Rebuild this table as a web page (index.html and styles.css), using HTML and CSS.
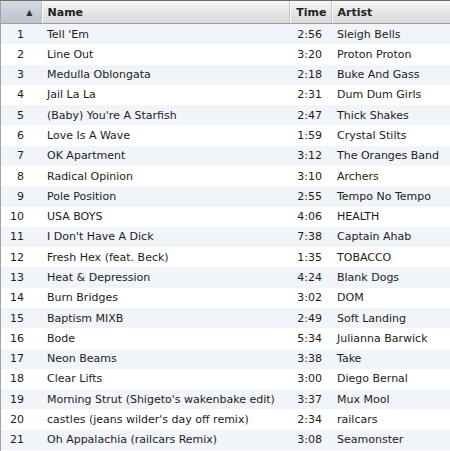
FILE: index.html
```html
<!DOCTYPE html>
<html lang="en">
    <head>
        <meta charset="UTF-8" />
        <title>Library</title>
        <link rel="stylesheet" href="styles.css">
    </head>
    <body>
        <section class="library">
            <table class="tracks">
                <colgroup>
                    <col class="col-num" />
                    <col class="col-name" />
                    <col class="col-time" />
                    <col class="col-artist" />
                </colgroup>
                <thead>
                    <tr>
                        <th class="num sorted"><span class="arrow">&#9650;</span></th>
                        <th class="name">Name</th>
                        <th class="time">Time</th>
                        <th class="artist">Artist</th>
                    </tr>
                </thead>
                <tbody>
                    <tr><td class="num">1</td><td class="name">Tell 'Em</td><td class="time">2:56</td><td class="artist">Sleigh Bells</td></tr>
                    <tr><td class="num">2</td><td class="name">Line Out</td><td class="time">3:20</td><td class="artist">Proton Proton</td></tr>
                    <tr><td class="num">3</td><td class="name">Medulla Oblongata</td><td class="time">2:18</td><td class="artist">Buke And Gass</td></tr>
                    <tr><td class="num">4</td><td class="name">Jail La La</td><td class="time">2:31</td><td class="artist">Dum Dum Girls</td></tr>
                    <tr><td class="num">5</td><td class="name">(Baby) You're A Starfish</td><td class="time">2:47</td><td class="artist">Thick Shakes</td></tr>
                    <tr><td class="num">6</td><td class="name">Love Is A Wave</td><td class="time">1:59</td><td class="artist">Crystal Stilts</td></tr>
                    <tr><td class="num">7</td><td class="name">OK Apartment</td><td class="time">3:12</td><td class="artist">The Oranges Band</td></tr>
                    <tr><td class="num">8</td><td class="name">Radical Opinion</td><td class="time">3:10</td><td class="artist">Archers</td></tr>
                    <tr><td class="num">9</td><td class="name">Pole Position</td><td class="time">2:55</td><td class="artist">Tempo No Tempo</td></tr>
                    <tr><td class="num">10</td><td class="name">USA BOYS</td><td class="time">4:06</td><td class="artist">HEALTH</td></tr>
                    <tr><td class="num">11</td><td class="name">I Don't Have A Dick</td><td class="time">7:38</td><td class="artist">Captain Ahab</td></tr>
                    <tr><td class="num">12</td><td class="name">Fresh Hex (feat. Beck)</td><td class="time">1:35</td><td class="artist">TOBACCO</td></tr>
                    <tr><td class="num">13</td><td class="name">Heat &amp; Depression</td><td class="time">4:24</td><td class="artist">Blank Dogs</td></tr>
                    <tr><td class="num">14</td><td class="name">Burn Bridges</td><td class="time">3:02</td><td class="artist">DOM</td></tr>
                    <tr><td class="num">15</td><td class="name">Baptism MIXB</td><td class="time">2:49</td><td class="artist">Soft Landing</td></tr>
                    <tr><td class="num">16</td><td class="name">Bode</td><td class="time">5:34</td><td class="artist">Julianna Barwick</td></tr>
                    <tr><td class="num">17</td><td class="name">Neon Beams</td><td class="time">3:38</td><td class="artist">Take</td></tr>
                    <tr><td class="num">18</td><td class="name">Clear Lifts</td><td class="time">3:00</td><td class="artist">Diego Bernal</td></tr>
                    <tr><td class="num">19</td><td class="name">Morning Strut (Shigeto's wakenbake edit)</td><td class="time">3:37</td><td class="artist">Mux Mool</td></tr>
                    <tr><td class="num">20</td><td class="name">castles (jeans wilder's day off remix)</td><td class="time">2:34</td><td class="artist">railcars</td></tr>
                    <tr><td class="num">21</td><td class="name">Oh Appalachia (railcars Remix)</td><td class="time">3:08</td><td class="artist">Seamonster</td></tr>
                </tbody>
            </table>
        </section>
    </body>
</html>
```

FILE: styles.css
```css
html,
body {
    margin: 0;
    padding: 0;
    background-color: white;
}

.library {
    width: 450px;
    height: 451px;
    border-top: 1px solid #6e6e6e;
    border-left: 1px solid #a3a3a3;
    box-sizing: border-box;
    overflow: hidden;
}

.tracks {
    width: 449px;
    table-layout: fixed;
    border-collapse: collapse;
    font-family: "DejaVu Sans", sans-serif;
    font-size: 11px;
    color: #1c1c1c;
}

.col-num {
    width: 40px;
}
.col-name {
    width: 248px;
}
.col-time {
    width: 42px;
}

.tracks th {
    height: 22px;
    padding: 0 6px;
    text-align: left;
    font-weight: bold;
    color: #222;
    background: linear-gradient(#f6f6f6, #e6e6e6 50%, #dadada);
    border-bottom: 1px solid #9e9e9e;
    border-left: 1px solid #c4c4c4;
    box-shadow: inset 1px 0 0 #fafafa;
}

.tracks th.sorted {
    border-left: none;
    background: linear-gradient(#d7dce3, #c8ced7 50%, #bcc3cd);
    box-shadow: none;
    text-align: right;
    padding-right: 8px;
}

.arrow {
    font-size: 8px;
    color: #333;
    position: relative;
    top: -1px;
}

.tracks th.time {
    text-align: right;
    padding-right: 4px;
}

.tracks td {
    height: 20.29px;
    padding: 0 6px;
    white-space: nowrap;
    overflow: hidden;
}

.tracks tbody tr:nth-child(odd) {
    background-color: #f1f4f8;
}

.tracks td.num {
    text-align: right;
    padding-right: 17px;
}

.tracks td.time {
    text-align: right;
    padding-right: 9px;
}
```
